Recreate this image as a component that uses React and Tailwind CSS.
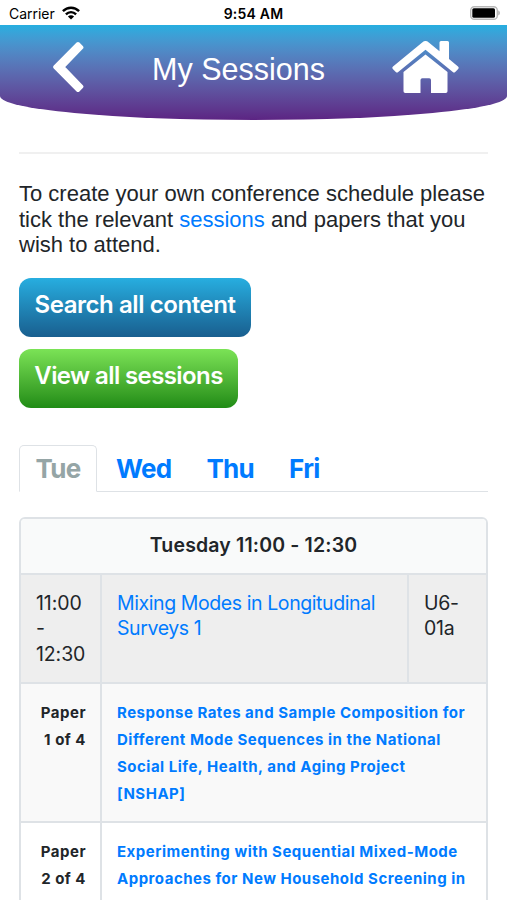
import React from 'react';

const days = ['Wed', 'Thu', 'Fri'];

const papers = [
  {
    id: 1,
    position: ['Paper', '1 of 4'],
    title: [
      'Response Rates and Sample Composition for',
      'Different Mode Sequences in the National',
      'Social Life, Health, and Aging Project',
      '[NSHAP]'
    ]
  },
  {
    id: 2,
    position: ['Paper', '2 of 4'],
    title: [
      'Experimenting with Sequential Mixed-Mode',
      'Approaches for New Household Screening in'
    ]
  }
];

const StatusBar = () => (
  <div className="relative flex h-[25px] items-center justify-between bg-white pl-[9px] pr-[7px] text-black">
    <div className="flex items-center gap-[7px] pt-[3px]">
      <span className="text-[14px] leading-[18px] tracking-[-0.02px]">Carrier</span>
      <svg className="mb-[2px] h-[14px] w-[18px]" viewBox="0 0 18 14" fill="none" stroke="#000" strokeWidth="2.4">
        <path d="M0.9 5.2C5.5 0.6 12.5 0.6 17.1 5.2" />
        <path d="M3.9 8.3C6.8 5.4 11.2 5.4 14.1 8.3" />
        <path d="M9 13.5L5.9 10.4C7.6 8.7 10.4 8.7 12.1 10.4Z" fill="#000" stroke="none" />
      </svg>
    </div>
    <span className="absolute left-1/2 top-[5px] -translate-x-1/2 whitespace-nowrap text-[14px] font-semibold leading-[18px] tracking-[0.2px]">
      9:54 AM
    </span>
    <svg className="mt-[1px] h-[14px] w-[30px]" viewBox="0 0 30 14">
      <rect x="0.7" y="0.7" width="26.6" height="12.6" rx="3.6" fill="#fff" stroke="#b8b8b8" strokeWidth="1.4" />
      <rect x="2.3" y="2.3" width="22.7" height="9.4" rx="1.5" fill="#000" />
      <path d="M28.3 4.6C30.3 5.2 30.3 8.8 28.3 9.4Z" fill="#a8a8a8" />
    </svg>
  </div>
);

const Header = () => (
  <header className="flex h-[95px] items-start rounded-b-[50%_24px] bg-linear-to-b from-[#25aee0] to-[#5c2483] pl-[52px] pr-[48px]">
    <svg className="mt-[16px] h-[52px] w-[32px]" viewBox="0 0 32 52">
      <path
        d="M3.2 26L26 3L29.4 6.4L10.4 26L29.4 45.6L26 49Z"
        fill="#fff"
        stroke="#fff"
        strokeWidth="4"
        strokeLinejoin="round"
      />
    </svg>
    <h1 className="ml-[68px] mt-[24px] whitespace-nowrap font-['Liberation_Sans'] text-[30.5px] leading-[40px] text-white">
      My Sessions
    </h1>
    <svg className="ml-auto mt-[15px] h-[54px] w-[67px]" viewBox="0 0 67 54" fill="#fff">
      <path d="M30.2 2.4Q33.5 -0.2 36.8 2.4L47.5 11.2V2.5Q47.5 1 49 1H55.5Q57 1 57 2.5V19L66 26.5Q67.3 27.7 66.2 28.9L63.2 32Q62 33 60.8 32L33.5 9.8L6.2 32Q5 33 3.8 32L0.8 28.9Q-0.3 27.7 1 26.5Z" />
      <path d="M33.5 14.5L55.5 32V51.2Q55.5 53 53.7 53H39V40Q39 38.2 37.2 38.2H30.3Q28.5 38.2 28.5 40V53H13.3Q11.5 53 11.5 51.2V32Z" />
    </svg>
  </header>
);

const DayTabs = () => (
  <nav className="mt-[37px] flex h-[47px] border-b border-[#dee2e6] text-[26px] font-bold leading-[39px] tracking-[-0.7px]">
    <a className="h-[47px] w-[78px] rounded-t-[5px] border border-b-white border-[#dee2e6] bg-white pt-[3px] text-center text-[#95a5a6]">
      Tue
    </a>
    {days.map(day => (
      <a key={day} className="ml-[19px] mr-[16px] pt-[4px] text-[#007bff]">
        {day}
      </a>
    ))}
  </nav>
);

const PaperRow = ({ paper, striped }) => (
  <div
    className={`grid grid-cols-[81px_1fr] border-t-2 border-[#dee2e6] text-[15px] font-bold leading-[27px] tracking-[0.5px] ${
      striped ? 'bg-[#f9f9f9]' : 'bg-white'
    }`}
  >
    <div className="border-r-2 border-[#dee2e6] pb-[14px] pr-[14px] pt-[15px] text-right text-[#212529]">
      {paper.position.map(line => (
        <div key={line}>{line}</div>
      ))}
    </div>
    <div className="whitespace-nowrap pb-[14px] pl-[15px] pt-[15px] text-[#007bff]">
      {paper.title.map(line => (
        <div key={line}>{line}</div>
      ))}
    </div>
  </div>
);

const SessionTable = () => (
  <section className="mt-[25px] overflow-hidden rounded-[6px] border-2 border-[#dee2e6]">
    <h2 className="bg-[#f9fafa] pb-[15px] pt-[13px] text-center text-[19.5px] font-semibold leading-[26px] tracking-[0.15px] text-[#212529]">
      Tuesday 11:00 - 12:30
    </h2>
    <div className="grid h-[109px] grid-cols-[81px_1fr_77px] border-t-2 border-[#dee2e6] bg-[#eee] text-[19.5px] leading-[25.5px] text-[#212529]">
      <div className="border-r-2 border-[#dee2e6] pl-[15px] pt-[16px] tracking-[-0.1px]">
        11:00
        <br />-<br />
        12:30
      </div>
      <a className="whitespace-nowrap border-r-2 border-[#dee2e6] pl-[15px] pt-[16px] tracking-[-0.41px] text-[#007bff]">
        Mixing Modes in Longitudinal
        <br />
        Surveys 1
      </a>
      <div className="pl-[15px] pt-[16px] tracking-[-0.3px]">
        U6-
        <br />
        01a
      </div>
    </div>
    {papers.map((paper, index) => (
      <PaperRow key={paper.id} paper={paper} striped={index % 2 === 0} />
    ))}
  </section>
);

export default function App() {
  return (
    <div className="h-[900px] w-[507px] overflow-hidden bg-white font-['Inter',sans-serif]">
      <StatusBar />
      <Header />
      <main className="px-[19px]">
        <hr className="mt-[32px] border-t-2 border-[#f0f0f0]" />
        <p className="mt-[27px] whitespace-nowrap font-['Liberation_Sans'] text-[22px] leading-[25.5px] text-[#212529]">
          To create your own conference schedule please
          <br />
          tick the relevant <a className="text-[#007bff]">sessions</a> and papers that you
          <br />
          wish to attend.
        </p>
        <div className="mt-[20px] flex flex-col items-start gap-[12px] text-[24px] font-semibold leading-[36px] text-white">
          <button className="h-[59px] w-[232px] whitespace-nowrap rounded-[12px] bg-linear-to-b from-[#27aee0] to-[#195f8f] pb-[5px] tracking-[-0.43px]">
            Search all content
          </button>
          <button className="h-[59px] w-[219px] whitespace-nowrap rounded-[12px] bg-linear-to-b from-[#7be356] to-[#1f8c15] pb-[5px] tracking-[-0.6px]">
            View all sessions
          </button>
        </div>
        <DayTabs />
        <SessionTable />
      </main>
    </div>
  );
}
